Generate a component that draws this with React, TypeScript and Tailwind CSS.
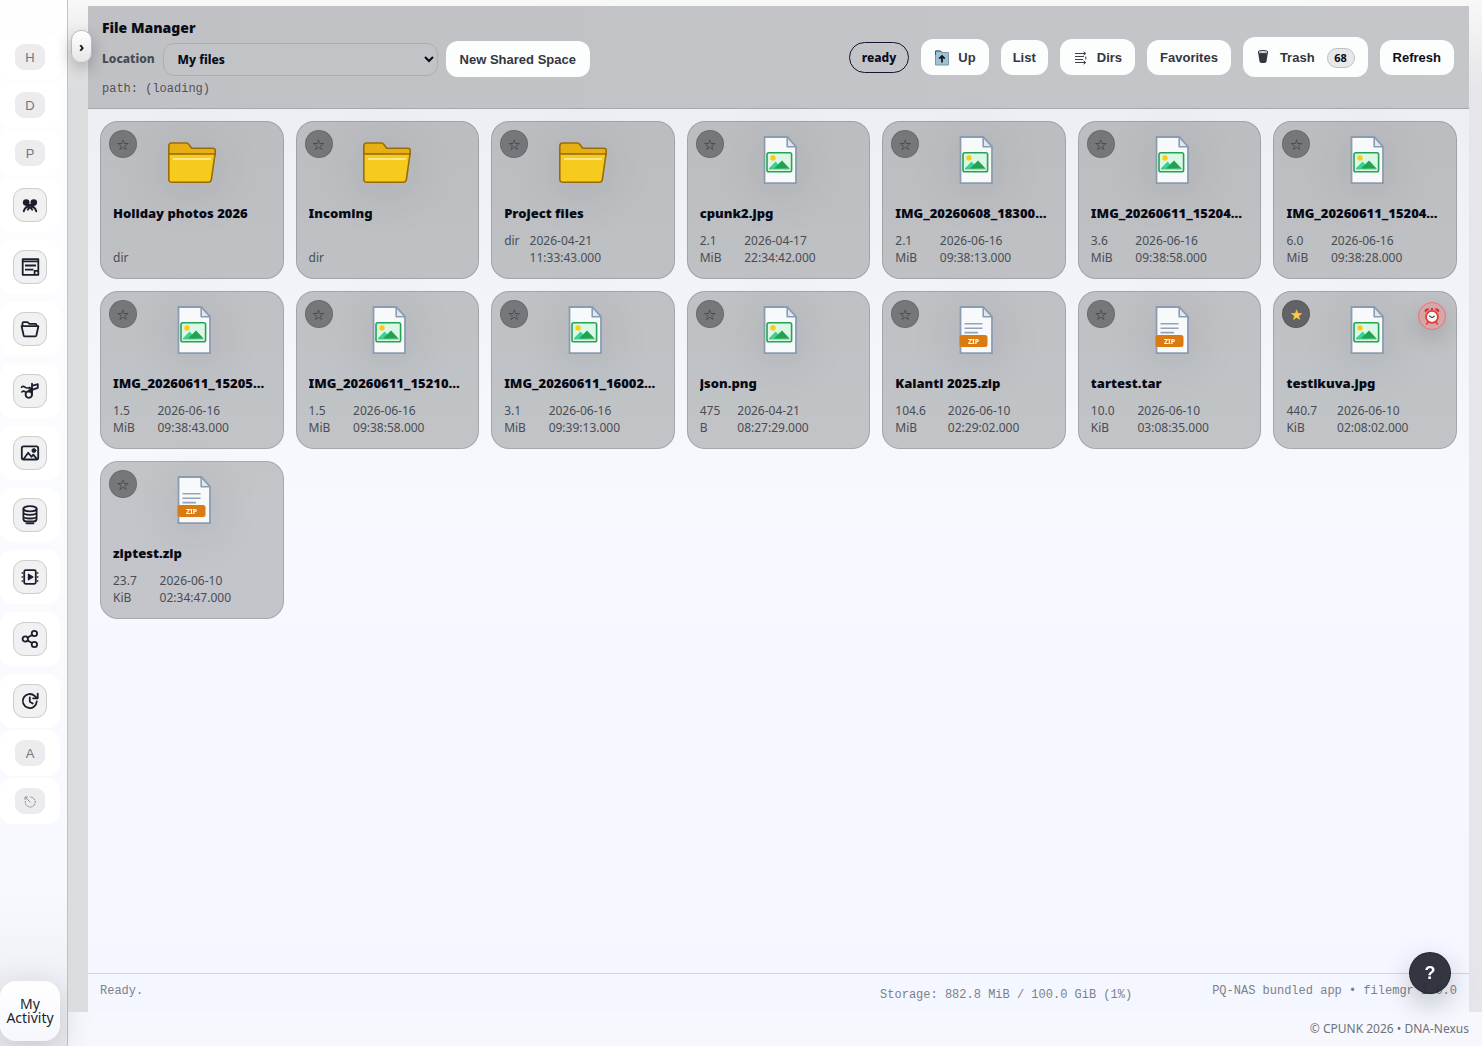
import React from 'react';
import clsx from 'clsx';

type FileKind = 'folder' | 'image' | 'zip';

interface FileEntry {
  id: number;
  name: string;
  kind: FileKind;
  size: string;
  date?: string;
  favorite?: boolean;
  expiring?: boolean;
}

const files: FileEntry[] = [
  { id: 1, name: 'Holiday photos 2026', kind: 'folder', size: 'dir' },
  { id: 2, name: 'Incoming', kind: 'folder', size: 'dir' },
  { id: 3, name: 'Project files', kind: 'folder', size: 'dir', date: '2026-04-21 11:33:43.000' },
  { id: 4, name: 'cpunk2.jpg', kind: 'image', size: '2.1 MiB', date: '2026-04-17 22:34:42.000' },
  { id: 5, name: 'IMG_20260608_18300…', kind: 'image', size: '2.1 MiB', date: '2026-06-16 09:38:13.000' },
  { id: 6, name: 'IMG_20260611_15204…', kind: 'image', size: '3.6 MiB', date: '2026-06-16 09:38:58.000' },
  { id: 7, name: 'IMG_20260611_15204…', kind: 'image', size: '6.0 MiB', date: '2026-06-16 09:38:28.000' },
  { id: 8, name: 'IMG_20260611_15205…', kind: 'image', size: '1.5 MiB', date: '2026-06-16 09:38:43.000' },
  { id: 9, name: 'IMG_20260611_15210…', kind: 'image', size: '1.5 MiB', date: '2026-06-16 09:38:58.000' },
  { id: 10, name: 'IMG_20260611_16002…', kind: 'image', size: '3.1 MiB', date: '2026-06-16 09:39:13.000' },
  { id: 11, name: 'json.png', kind: 'image', size: '475 B', date: '2026-04-21 08:27:29.000' },
  { id: 12, name: 'Kalanti 2025.zip', kind: 'zip', size: '104.6 MiB', date: '2026-06-10 02:29:02.000' },
  { id: 13, name: 'tartest.tar', kind: 'zip', size: '10.0 KiB', date: '2026-06-10 03:08:35.000' },
  { id: 14, name: 'testikuva.jpg', kind: 'image', size: '440.7 KiB', date: '2026-06-10 02:08:02.000', favorite: true, expiring: true },
  { id: 15, name: 'ziptest.zip', kind: 'zip', size: '23.7 KiB', date: '2026-06-10 02:34:47.000' },
];

const svgIcon = {
  width: 20,
  height: 20,
  viewBox: '0 0 20 20',
  fill: 'none',
  stroke: 'currentColor',
  strokeWidth: 1.8,
  strokeLinecap: 'round' as const,
  strokeLinejoin: 'round' as const,
};

const railApps = [
  {
    label: 'Groups',
    icon: (
      <svg {...svgIcon}>
        <circle cx="6.2" cy="7.6" r="3.3" fill="currentColor" stroke="none" />
        <circle cx="13.8" cy="7.6" r="3.3" fill="currentColor" stroke="none" />
        <path d="M3.8 16.200C5 12.800 7 11.400 9 12c1.600.4 2.600 1.300 3.200 2.600M16.200 16.200C15 12.800 13 11.400 11 12c-1.600.4-2.600 1.300-3.200 2.600" strokeWidth="2" />
        <path d="M6.500 9h7v2.500h-7z" fill="currentColor" stroke="none" />
      </svg>
    ),
  },
  {
    label: 'Notes',
    icon: (
      <svg {...svgIcon} strokeLinecap="butt">
        <path d="M14.500 17.800H2.700V2.200h15.600v11" />
        <path d="M3 4.300h15M5 8.500h11M5 12.600h8.500" />
        <path d="M14.600 13.800h3.700v4h-3.700z" />
      </svg>
    ),
  },
  {
    label: 'Files',
    icon: (
      <svg {...svgIcon}>
        <path d="M2.500 7V4.200c0-.6.4-1 1-1h4l1.800 1.600h6c.7 0 1.200.5 1.200 1.200v1" />
        <path d="M1.600 7.200h16.800l-2 9c-.2.800-.7 1.200-1.500 1.200H5.100c-.8 0-1.300-.4-1.500-1.200z" />
      </svg>
    ),
  },
  {
    label: 'Music',
    icon: (
      <svg {...svgIcon}>
        <path d="M1.500 6.200c1.200-1.400 2.300-1 3.500 0s2.500 1.200 4.500.2M1.800 11c1.300-1.400 2.400-1 3.500-.2" strokeWidth="1.600" />
        <circle cx="8.800" cy="13.600" r="3.200" />
        <path d="M12 13.600V2.600M12 4.800l5.800-1.600v3.600L8.500 10.200" />
        <path d="M9.500 6.800h2.800v4.200H9.500z" fill="currentColor" strokeWidth="1" />
      </svg>
    ),
  },
  {
    label: 'Photos',
    icon: (
      <svg {...svgIcon}>
        <rect x="1.800" y="3.300" width="16.400" height="13.200" rx="1.800" />
        <circle cx="13.900" cy="7.600" r="2" fill="currentColor" strokeWidth="0.800" />
        <path d="M3.800 15.800 8.200 9.800l3.300 4 1.800-2.200 3.200 4" />
      </svg>
    ),
  },
  {
    label: 'Storage',
    icon: (
      <svg {...svgIcon}>
        <ellipse cx="10" cy="3.800" rx="6.600" ry="2.600" />
        <path d="M3.400 4v9.800c0 1.500 1.400 2.700 3 2.700h7.200c1.600 0 3-1.200 3-2.700V4M3.400 7.600c0 1.300 2.900 2.200 6.600 2.200s6.600-.9 6.600-2.200M3.400 11.600c0 1.200 2.900 1.900 6.600 1.900s6.600-.7 6.600-1.900" />
        <path d="M6.500 18.300h7" />
      </svg>
    ),
  },
  {
    label: 'Videos',
    icon: (
      <svg {...svgIcon}>
        <rect x="4.200" y="3.200" width="11.600" height="13.600" rx="1.500" />
        <path d="M8.400 7.200v5.600l4.600-2.800z" fill="currentColor" strokeWidth="1.200" />
        <path d="M2.200 6h.4M2.200 10h.4M2.200 14h.4M17.400 6h.4M17.400 10h.4M17.400 14h.4" strokeWidth="1.600" />
      </svg>
    ),
  },
  {
    label: 'Shares',
    icon: (
      <svg {...svgIcon}>
        <circle cx="5.300" cy="10" r="2.700" />
        <circle cx="14.400" cy="4.500" r="2.700" />
        <circle cx="14.400" cy="15.500" r="2.700" />
        <path d="m7.700 8.600 4.300-2.600M7.700 11.400l4.300 2.600" />
      </svg>
    ),
  },
  {
    label: 'Versions',
    icon: (
      <svg {...svgIcon}>
        <path d="M16.800 10.300A7 7 0 1 1 14.600 4.900l2.400 2.200" />
        <path d="M17.700 2.600v4.700h-4.600M9.800 6.300v4.500l3 1.800" />
      </svg>
    ),
  },
];

function RailLetter({ label, children }: { label: string; children: React.ReactNode }) {
  return (
    <a
      href="#"
      aria-label={label}
      className="flex h-[46px] w-[60px] items-center justify-center rounded-xl bg-white font-['Liberation_Sans'] text-[13px] text-[#73757e]"
    >
      <span className="flex h-[26px] w-[30px] items-center justify-center rounded-[9px] bg-[#ececee] pt-0.5">{children}</span>
    </a>
  );
}

function Sidebar() {
  return (
    <nav className="flex w-[68px] shrink-0 flex-col border-r border-[#c2c3c7] bg-linear-to-b from-[#fefefe] via-[#f8f9fe] via-85% to-[#ebecf1] pt-[34px] pb-[5px]">
      <div className="flex flex-col gap-0.5">
        <RailLetter label="Home">H</RailLetter>
        <RailLetter label="Dashboard">D</RailLetter>
        <RailLetter label="Profile">P</RailLetter>
        <div className="flex flex-col gap-2">
          {railApps.map((app) => (
            <a
              key={app.label}
              href="#"
              aria-label={app.label}
              className="flex h-[54px] w-[60px] items-center justify-center rounded-xl bg-white text-[#1b1f2d]"
            >
              <span className="flex size-[34px] items-center justify-center rounded-[11px] border border-[#cccccd] bg-[#f1f1f2]">
                {app.icon}
              </span>
            </a>
          ))}
        </div>
        <RailLetter label="Admin">A</RailLetter>
        <RailLetter label="Sign out">
          <svg width="12" height="12" viewBox="0 0 12 12" fill="none" stroke="#8e8f96" strokeWidth="1">
            <path d="M6.500 1A5 5 0 1 1 1.300 5" strokeDasharray="2.500 .6" />
            <path d="M6.500 6.500 1.500 1.500M1 3.800V1h2.800" />
          </svg>
        </RailLetter>
      </div>
      <button className="mt-auto flex size-[60px] items-center justify-center rounded-2xl bg-linear-to-b from-white to-[#f6f7fc] text-[14px] leading-[14px] text-[#1b1e2b] shadow-[0_8px_36px_rgba(0,0,0,0.18)]">
        My Activity
      </button>
    </nav>
  );
}

function FolderArt() {
  return (
    <svg width="56" height="56" viewBox="0 0 56 56" stroke="#9a6b0a" strokeWidth="1.600" strokeLinejoin="round">
      <path d="M4.800 20V12c0-1.800 1-3 2.800-3h14.800c1 0 1.700.4 2.300 1.200l3 4h21c1.700 0 2.800 1 2.600 2.800L51 21z" fill="#e6b012" />
      <path d="M4.800 20h46.200l-3.600 25.400c-.3 1.900-1.300 2.900-3.200 2.900H8c-2.100 0-3.200-1.100-3.200-3.100z" fill="#f7cb1d" />
      <path d="M9 25h38" stroke="#fde68a" strokeWidth="2" />
    </svg>
  );
}

function DocumentArt({ kind }: { kind: FileKind }) {
  return (
    <svg width="56" height="56" viewBox="0 0 56 56">
      <path d="M14.500 3h22.700l8.800 9.700V49.200H14.500z" fill="#f7f9fb" stroke="#8b9cb1" strokeWidth="1.800" />
      <path d="M37.200 3v9.700H46z" fill="#dfe7f0" stroke="#8b9cb1" strokeWidth="1.600" strokeLinejoin="round" />
      {kind === 'image' ? (
        <>
          <rect x="17" y="18.800" width="24.600" height="19" rx="1.800" fill="#dcf7e5" stroke="#22a452" strokeWidth="1.600" />
          <circle cx="23" cy="24" r="2.700" fill="#facc15" />
          <path d="m18.800 34.500 6.800-7 6.500 7z" fill="#34d399" />
          <path d="m24 34.500 8-8 7.500 8z" fill="#1fa34f" />
          <path d="M19 34.500h20.500v.8H19z" fill="#1fa34f" />
        </>
      ) : (
        <>
          <path d="M18.500 19.800h18M18.500 24.200h18M18.500 28.600h13.500" stroke="#94a3b8" strokeWidth="1.600" />
          <rect x="13.500" y="31" width="28" height="12" rx="2.500" fill="#d97b10" />
          <text x="27.500" y="39.500" textAnchor="middle" fontSize="7" fontWeight="700" fill="#ffffff" fontFamily="Noto Sans, sans-serif">
            ZIP
          </text>
        </>
      )}
    </svg>
  );
}

function AlarmArt() {
  return (
    <svg width="18" height="20" viewBox="0 0 18 20">
      <path d="M2.200 6.500C.8 4.500 2.500 1.200 6.800 2.800zM15.800 6.500c1.400-2 -.3-5.300-4.600-3.700z" fill="#d32f2f" />
      <path d="m5 16-1.600 2.600M13 16l1.600 2.600" stroke="#e53935" strokeWidth="1.600" />
      <circle cx="9" cy="10.800" r="6" fill="#f5f5f5" stroke="#e53935" strokeWidth="1.800" />
      <path d="m6.200 9.800 2.800 1.800 2.600-1.600" fill="none" stroke="#37474f" strokeWidth="1.100" />
      <path d="M9 2v2" stroke="#b71c1c" strokeWidth="1.500" />
    </svg>
  );
}

function FileCard({ file }: { file: FileEntry }) {
  return (
    <article className="relative flex h-[158px] flex-col rounded-[18px] border border-black/15 bg-[#0a0f0a]/22 p-3">
      <button
        aria-label={file.favorite ? 'Remove favorite' : 'Add favorite'}
        className={clsx(
          "absolute top-2 left-2 flex size-7 items-center justify-center rounded-full border border-black/10 pt-0.5 font-['DejaVu_Sans'] text-[15px] leading-none",
          file.favorite ? 'bg-[#626367] text-[#ffcb3d]' : 'bg-[#76777a] text-[#2e2f33]'
        )}
      >
        {file.favorite ? '★' : '☆'}
      </button>
      {file.expiring && (
        <button
          aria-label="Expires soon"
          className="absolute top-2.5 right-2.5 flex size-7 items-center justify-center rounded-full border border-[#ee7276] bg-[#d5a6aa] shadow-[0_8px_22px_rgba(0,0,0,0.16)]"
        >
          <AlarmArt />
        </button>
      )}
      <div className="flex justify-center drop-shadow-[0_6px_24px_rgba(0,0,20,0.12)]">
        {file.kind === 'folder' ? <FolderArt /> : <DocumentArt kind={file.kind} />}
      </div>
      <h2 className="mt-[13px] truncate text-[13px] leading-5 font-black text-[#080b16]">{file.name}</h2>
      <div className="mt-auto flex gap-2.5 text-[12px] leading-[17px] text-[#4a4c54]">
        <span>{file.size}</span>
        {file.date && <span>{file.date}</span>}
      </div>
    </article>
  );
}

function ToolButton({ children, className }: { children: React.ReactNode; className?: string }) {
  return (
    <button
      className={clsx(
        "flex items-center gap-2 rounded-xl bg-[#fcfdfd] pt-0.5 font-['Liberation_Sans'] text-[13px] font-bold whitespace-nowrap",
        className
      )}
    >
      {children}
    </button>
  );
}

function Toolbar() {
  return (
    <div className="flex items-center gap-3">
      <span className="rounded-full border border-[#14152e] px-3 pt-[7px] pb-1.5 text-[12px] leading-4 font-extrabold text-[#0a0d18]">
        ready
      </span>
      <ToolButton className="h-9 px-[13px] text-[#33363f]">
        <svg width="16" height="16" viewBox="0 0 16 16">
          <path d="M1.500 1h5l1.500 1.500h6.500V15h-13z" fill="#9dc3d5" stroke="#7c97a3" strokeWidth="1" />
          <path d="M1.500 5V1h5l1.500 1.500" fill="none" stroke="#4a555b" />
          <path d="M8 12.500V6M5.200 8.700 8 5.900l2.800 2.800" fill="none" stroke="#17191f" strokeWidth="1.800" />
        </svg>
        Up
      </ToolButton>
      <ToolButton className="h-[35px] px-3 text-[#33363f]">List</ToolButton>
      <ToolButton className="h-9 px-[13px] text-[#33363f]">
        <svg width="16" height="16" viewBox="0 0 16 16" fill="none" stroke="#3d4048" strokeWidth="1">
          <path d="M2 3.500h10M2 6.500h9M2 9.500h8M2 12.500h10M10.500 1.800 12.800 3.500l-2.300 1.700M12.800 6.500v3M10.500 10.800l2.300 1.700-2.300 1.700" />
        </svg>
        Dirs
      </ToolButton>
      <ToolButton className="h-[35px] px-[13px] text-[#33363f]">Favorites</ToolButton>
      <ToolButton className="h-10 px-[13px] text-[#33363f]">
        <svg width="16" height="16" viewBox="0 0 16 16">
          <path d="M2 2 3.500 11.500c.2 1.100 1.700 1.500 3.500 1.500s3.300-.4 3.500-1.500L12 2z" fill="#34373e" />
          <ellipse cx="7" cy="2" rx="5" ry="1.500" fill="#dfe1e4" stroke="#34373e" strokeWidth="1" />
        </svg>
        Trash
        <span className="ml-1 flex h-5 w-7 items-center justify-center rounded-full border border-[#bfc0c4] bg-[#e7e8eb] font-['Noto_Sans'] text-[11px] text-[#0b0e18]">
          68
        </span>
      </ToolButton>
      <ToolButton className="h-[35px] px-[13px] text-[#0b0e18]">Refresh</ToolButton>
    </div>
  );
}

export default function App() {
  return (
    <div className="relative flex min-h-screen bg-[#f6f8fe] font-['Noto_Sans',sans-serif]">
      <Sidebar />
      <button
        aria-label="Expand sidebar"
        className="absolute top-[30px] left-[71px] z-10 h-[33px] w-[21px] rounded-[10px] border border-[#b9babd] bg-linear-to-b from-white to-[#e6e6e7] text-[14px] leading-none font-bold text-[#0a0d18] shadow-[0_6px_16px_rgba(0,0,0,0.25)]"
      >
        ›
      </button>

      <div className="flex min-w-0 flex-1 flex-col">
        <div className="flex flex-1 flex-col bg-[linear-gradient(to_bottom,#f8f8f8,transparent_90px),linear-gradient(to_right,#dbdcde,#e5e6e9)] pt-1.5 pr-[13px] pl-5">
          <main className="flex flex-1 flex-col bg-linear-to-b from-[#ebecf1] via-[#f7f9ff] via-50% to-[#f4f7ff]">
            <header className="flex items-center justify-between border-b border-[#a6a7ab] bg-linear-to-r from-[#c0c1c5] to-[#c5c6ca] py-3 pr-[15px] pl-3.5">
              <div>
                <h1 className="text-[14px] leading-5 font-black text-[#0a0d18]">File Manager</h1>
                <div className="mt-[3px] flex items-center">
                  <label htmlFor="location" className="text-[12px] font-extrabold text-[#474a52]">
                    Location
                  </label>
                  <select
                    id="location"
                    className="ml-2 h-[33px] w-[275px] rounded-[11px] border border-[#adaeb2] bg-[#c2c3c7] px-2.5 text-[12px] font-extrabold text-[#080b16]"
                  >
                    <option>My files</option>
                  </select>
                  <ToolButton className="ml-2 h-9 px-3.5 text-[#33363f]">New Shared Space</ToolButton>
                </div>
                <p className="mt-[5px] font-['Liberation_Mono'] text-[12px] leading-[14px] text-[#50525a]">path: (loading)</p>
              </div>
              <Toolbar />
            </header>

            <section className="grid grid-cols-[repeat(auto-fill,minmax(180px,1fr))] gap-3 p-3">
              {files.map((file) => (
                <FileCard key={file.id} file={file} />
              ))}
            </section>

            <footer className="mt-auto flex items-start border-t border-[#d2d4da] px-3 py-2 font-['Liberation_Mono'] text-[12px] leading-[18px] text-[#7d7f88]">
              <span>Ready.</span>
              <span className="mt-1 mr-20 ml-auto">Storage: 882.8 MiB / 100.0 GiB (1%)</span>
              <span>PQ-NAS bundled app • filemgr 1.0.0</span>
            </footer>
          </main>
        </div>
        <p className="pr-[13px] text-right text-[12px] leading-[34px] text-[#6f7179]">© CPUNK 2026 • DNA-Nexus</p>
      </div>

      <button
        aria-label="Help"
        className="fixed right-[31px] bottom-[52px] size-[42px] rounded-full border border-black/30 bg-[#282a36]/95 font-['Liberation_Sans'] text-[18px] font-bold text-white shadow-[0_10px_28px_rgba(0,0,0,0.22)]"
      >
        ?
      </button>
    </div>
  );
}
